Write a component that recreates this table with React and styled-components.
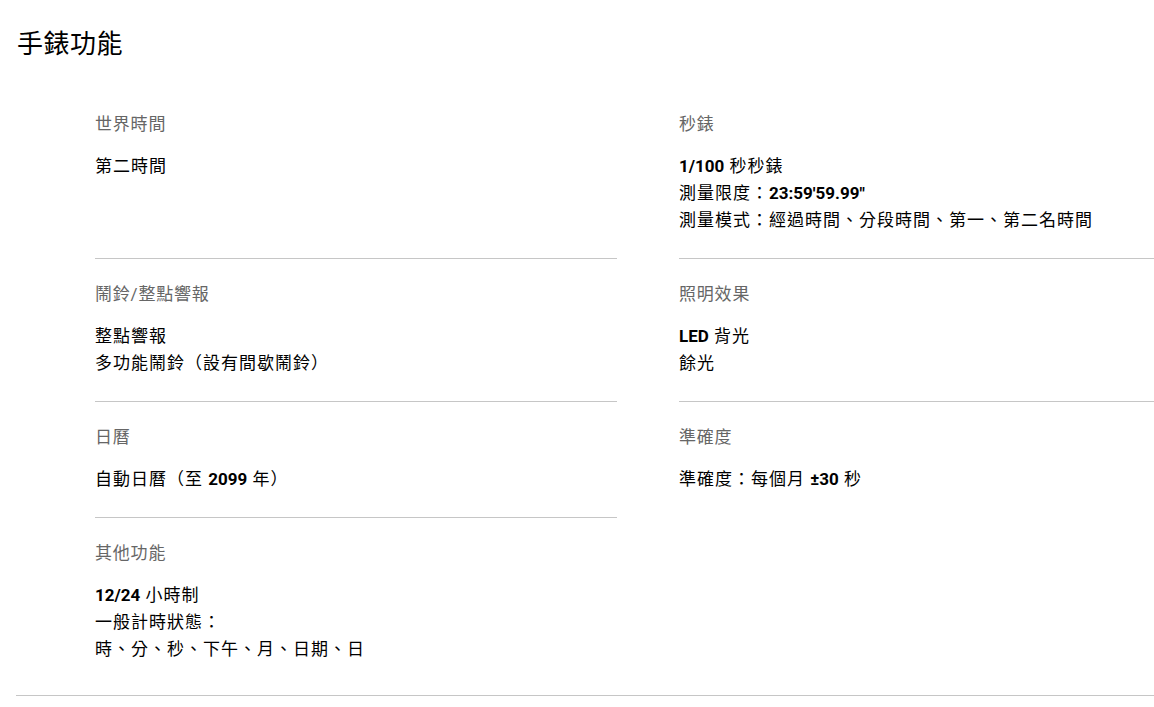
import React from 'react';
import styled, { createGlobalStyle } from 'styled-components';

const GlobalStyle = createGlobalStyle`
  html, body {
    margin: 0;
    padding: 0;
    background: #fff;
  }
  body {
    font-family: Roboto, "Noto Sans CJK TC", sans-serif;
    color: #000;
  }
`;

const Section = styled.section`
  width: 1154px;
  padding: 0 0 8px 16px;
  box-sizing: border-box;
`;

const SectionInner = styled.div`
  border-bottom: 1px solid #c6c6c6;
`;

const Title = styled.h2`
  margin: 0;
  padding: 26px 0 27px 1px;
  font-size: 26px;
  line-height: 36px;
  font-weight: 400;
  letter-spacing: 0.5px;
  color: #000;
`;

const Grid = styled.div`
  display: grid;
  grid-template-columns: 522px 1fr;
  column-gap: 62px;
  padding-left: 79px;
`;

const Cell = styled.div`
  padding: 22px 0 ${({ last }) => (last ? '32px' : '24px')};
  border-bottom: ${({ divider }) => (divider ? '1px solid #c6c6c6' : 'none')};
`;

const Label = styled.div`
  font-size: 17px;
  line-height: 27px;
  letter-spacing: 0.8px;
  color: #666;
  margin-bottom: 15px;
`;

const Line = styled.div`
  font-size: 17px;
  line-height: 27px;
  letter-spacing: 1px;
  color: #000;
`;

const Num = styled.span`
  font-weight: 700;
  letter-spacing: 0;
`;

const rows = [
  [
    {
      label: '世界時間',
      lines: [<>第二時間</>],
    },
    {
      label: '秒錶',
      lines: [
        <><Num>1/100</Num> 秒秒錶</>,
        <>測量限度：<Num>23:59'59.99"</Num></>,
        <>測量模式：經過時間、分段時間、第一、第二名時間</>,
      ],
    },
  ],
  [
    {
      label: '鬧鈴/整點響報',
      lines: [<>整點響報</>, <>多功能鬧鈴（設有間歇鬧鈴）</>],
    },
    {
      label: '照明效果',
      lines: [<><Num>LED</Num> 背光</>, <>餘光</>],
    },
  ],
  [
    {
      label: '日曆',
      lines: [<>自動日曆（至 <Num>2099</Num> 年）</>],
    },
    {
      label: '準確度',
      lines: [<>準確度：每個月 <Num>±30</Num> 秒</>],
      noDivider: true,
    },
  ],
  [
    {
      label: '其他功能',
      lines: [
        <><Num>12/24</Num> 小時制</>,
        <>一般計時狀態：</>,
        <>時、分、秒、下午、月、日期、日</>,
      ],
      noDivider: true,
      last: true,
    },
    null,
  ],
];

export default function App() {
  return (
    <>
      <GlobalStyle />
      <Section>
        <SectionInner>
          <Title>手錶功能</Title>
          <Grid>
            {rows.flatMap((row, r) =>
              row.map((item, c) =>
                item ? (
                  <Cell key={`${r}-${c}`} divider={!item.noDivider} last={item.last}>
                    <Label>{item.label}</Label>
                    {item.lines.map((l, i) => (
                      <Line key={i}>{l}</Line>
                    ))}
                  </Cell>
                ) : (
                  <div key={`${r}-${c}`} />
                )
              )
            )}
          </Grid>
        </SectionInner>
      </Section>
    </>
  );
}
